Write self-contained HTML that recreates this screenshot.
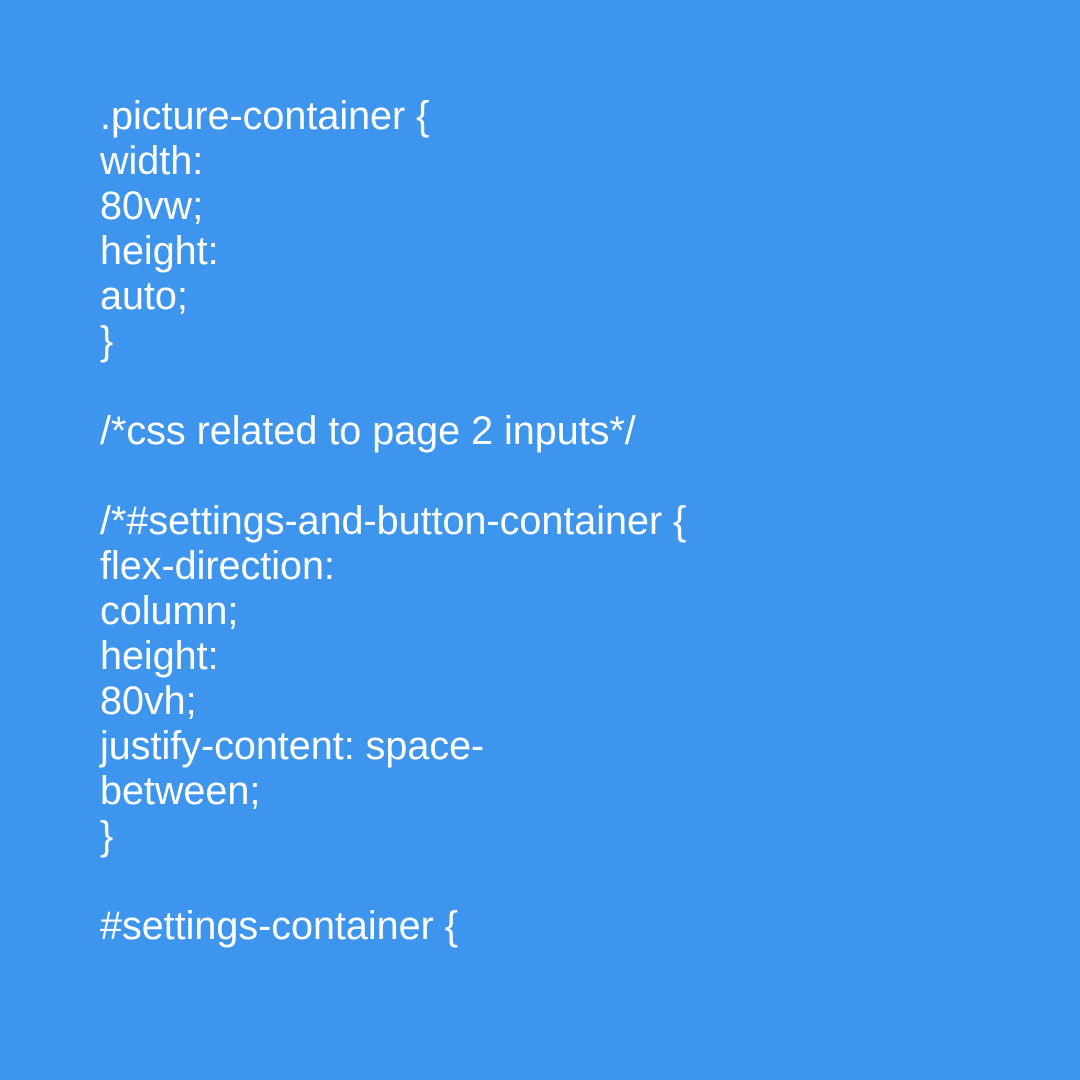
<!DOCTYPE html>
<html><head><meta charset="utf-8"><style>
html,body{margin:0;padding:0;width:1080px;height:1080px;background:#3e95ee;overflow:hidden}
pre{margin:0;position:absolute;left:100px;top:94px;font-family:"Liberation Sans",Arial,sans-serif;font-size:39.5px;line-height:45px;color:#fff;white-space:pre}
</style></head><body><pre>.picture-container {
width:
80vw;
height:
auto;
}

/*css related to page 2 inputs*/

/*#settings-and-button-container {
flex-direction:
column;
height:
80vh;
justify-content: space-
between;
}

#settings-container {</pre></body></html>
